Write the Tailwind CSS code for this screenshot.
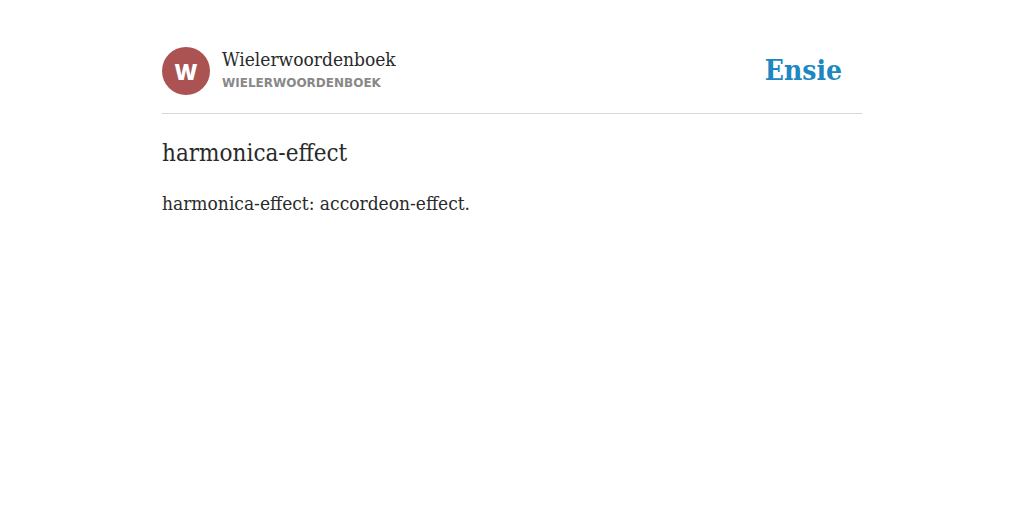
<!DOCTYPE html>
<html lang="nl">
<head>
  <meta charset="UTF-8" />
  <meta name="viewport" content="width=device-width, initial-scale=1.0" />
  <title>harmonica-effect | Wielerwoordenboek | Ensie</title>
  <script src="https://cdn.jsdelivr.net/npm/@tailwindcss/browser@4"></script>
</head>
<body class="bg-white text-[#2a2a2a] font-['DejaVu_Serif_Condensed','Liberation_Serif',serif]">

  <div class="max-w-[700px] mx-auto pt-[47px]">

    <!-- Header -->
    <header class="flex items-center justify-between border-b border-[#d9d9d9] pb-[18px] pr-5">
      <div class="flex items-center gap-3">
        <div class="w-12 h-12 shrink-0 rounded-full bg-[#ab5353] text-white flex items-center justify-center text-[22px] font-extrabold font-['Open_Sans',sans-serif]">W</div>
        <div>
          <p class="text-[19px] leading-6">Wielerwoordenboek</p>
          <p class="text-[12px] leading-6 font-bold text-[#888888] font-['DejaVu_Sans',sans-serif]">WIELERWOORDENBOEK</p>
        </div>
      </div>
      <a href="#" class="text-[28px] leading-10 font-bold text-[#1c87c0]">Ensie</a>
    </header>

    <!-- Definitie -->
    <main>
      <h1 class="mt-5 text-[24px] leading-[38px]">harmonica-effect</h1>
      <p class="mt-4 text-[19px] leading-[30px]">harmonica-effect: accordeon-effect.</p>
    </main>

  </div>

</body>
</html>
